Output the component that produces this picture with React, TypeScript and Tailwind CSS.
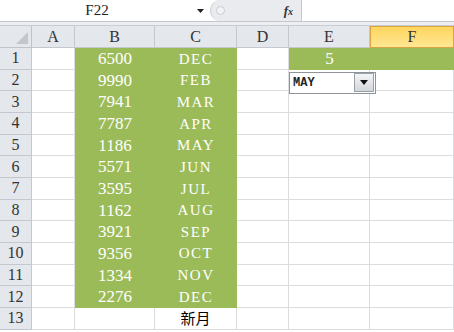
import React from "react";

const rowsData: [string, string][] = [
  ["6500", "DEC"],
  ["9990", "FEB"],
  ["7941", "MAR"],
  ["7787", "APR"],
  ["1186", "MAY"],
  ["5571", "JUN"],
  ["3595", "JUL"],
  ["1162", "AUG"],
  ["3921", "SEP"],
  ["9356", "OCT"],
  ["1334", "NOV"],
  ["2276", "DEC"],
  ["", ""],
];

const cols = ["A", "B", "C", "D", "E", "F"];

export default function App() {
  return (
    <div className="w-[454px] h-[332px] overflow-hidden bg-white" style={{ fontFamily: '"Liberation Serif", serif' }}>
      {/* formula bar */}
      <div className="flex h-[22px] border-b border-[#c4c8ce] bg-white">
        <div className="relative flex w-[210px] items-center justify-center text-[15px] text-[#222]">
          <span className="pr-[16px]">F22</span>
          <svg className="absolute right-[6px] top-[9px]" width="7" height="4" viewBox="0 0 7 4">
            <path d="M0 0 L7 0 L3.5 4 Z" fill="#222" />
          </svg>
        </div>
        <div className="relative flex w-[91px] items-center justify-end rounded-l-[11px] border-l border-[#c9ccd1] bg-[#e9ebee] pr-[8px]">
          <div className="absolute left-[5px] top-[6px] h-[9px] w-[9px] rounded-full border border-[#c9ccd1] bg-[#f2f3f5]" />
          <span className="text-[13px] italic font-bold text-[#333]" style={{ fontFamily: '"Liberation Serif", serif' }}>
            f<span className="text-[10px]">x</span>
          </span>
        </div>
        <div className="flex-1 border-l border-[#c4c8ce] bg-white" />
      </div>
      <div className="h-[4px] bg-[#eceef1] border-b border-[#c9ccd1]" />

      <div
        className="grid"
        style={{
          gridTemplateColumns: "32px 43px 80px 82px 52px 81px 84px",
          gridTemplateRows: "22px repeat(13, 21.67px)",
        }}
      >
        {/* header row */}
        <div className="relative border-r border-b border-[#c0c4ca] bg-[#e4e7eb]">
          <svg className="absolute right-[3px] bottom-[3px]" width="12" height="12" viewBox="0 0 12 12">
            <path d="M12 0 L12 12 L0 12 Z" fill="#c3c7cd" />
          </svg>
        </div>
        {cols.map((c) =>
          c === "F" ? (
            <div
              key={c}
              className="flex items-center justify-center border border-[#dba443] bg-gradient-to-b from-[#ffd55d] to-[#ffe792] text-[16px] text-[#333]"
            >
              {c}
            </div>
          ) : (
            <div
              key={c}
              className="flex items-center justify-center border-r border-b border-[#c4c8ce] bg-[#e4e7eb] text-[16px] text-[#333]"
            >
              {c}
            </div>
          )
        )}

        {rowsData.map(([num, mon], i) => {
          const r = i + 1;
          const green = r <= 12;
          return (
            <React.Fragment key={r}>
              <div className="flex items-center justify-center border-r border-b border-[#c4c8ce] bg-[#e4e7eb] text-[16px] text-[#333]">
                {r}
              </div>
              <div className="border-r border-b border-[#dadcdd]" />
              {green ? (
                <>
                  <div className="flex items-center justify-center bg-[#9bbb59] text-[17px] text-white">{num}</div>
                  <div className="flex items-center justify-center bg-[#9bbb59] text-[15px] tracking-[1.5px] text-white">
                    {mon}
                  </div>
                </>
              ) : (
                <>
                  <div className="border-r border-b border-[#dadcdd]" />
                  <div
                    className="flex items-center justify-center border-r border-b border-[#dadcdd] text-[15px] text-black"
                    style={{ fontFamily: '"Noto Sans CJK TC", "Noto Sans CJK SC", sans-serif' }}
                  >
                    新月
                  </div>
                </>
              )}
              <div className="border-r border-b border-[#dadcdd]" />
              {r === 1 ? (
                <>
                  <div className="flex items-center justify-center bg-[#9bbb59] text-[17px] text-white">5</div>
                  <div className="bg-[#9bbb59]" />
                </>
              ) : r === 2 ? (
                <>
                  <div className="relative border-r border-b border-[#dadcdd]">
                    <div className="absolute left-0 top-[2px] z-10 flex h-[22px] w-[87px] items-center border border-[#8f949b] bg-white">
                      <span
                        className="flex-1 pl-[3px] text-[12px] font-bold text-[#222]"
                        style={{ fontFamily: '"Liberation Mono", monospace' }}
                      >
                        MAY
                      </span>
                      <div className="mr-[1px] flex h-[19px] w-[20px] items-center justify-center border border-[#9aa0a7] bg-gradient-to-b from-[#f4f5f6] to-[#d3d6da]">
                        <svg width="8" height="5" viewBox="0 0 8 5">
                          <path d="M0 0 L8 0 L4 5 Z" fill="#111" />
                        </svg>
                      </div>
                    </div>
                  </div>
                  <div className="border-r border-b border-[#dadcdd]" />
                </>
              ) : (
                <>
                  <div className="border-r border-b border-[#dadcdd]" />
                  <div className="border-r border-b border-[#dadcdd]" />
                </>
              )}
            </React.Fragment>
          );
        })}
      </div>
    </div>
  );
}
